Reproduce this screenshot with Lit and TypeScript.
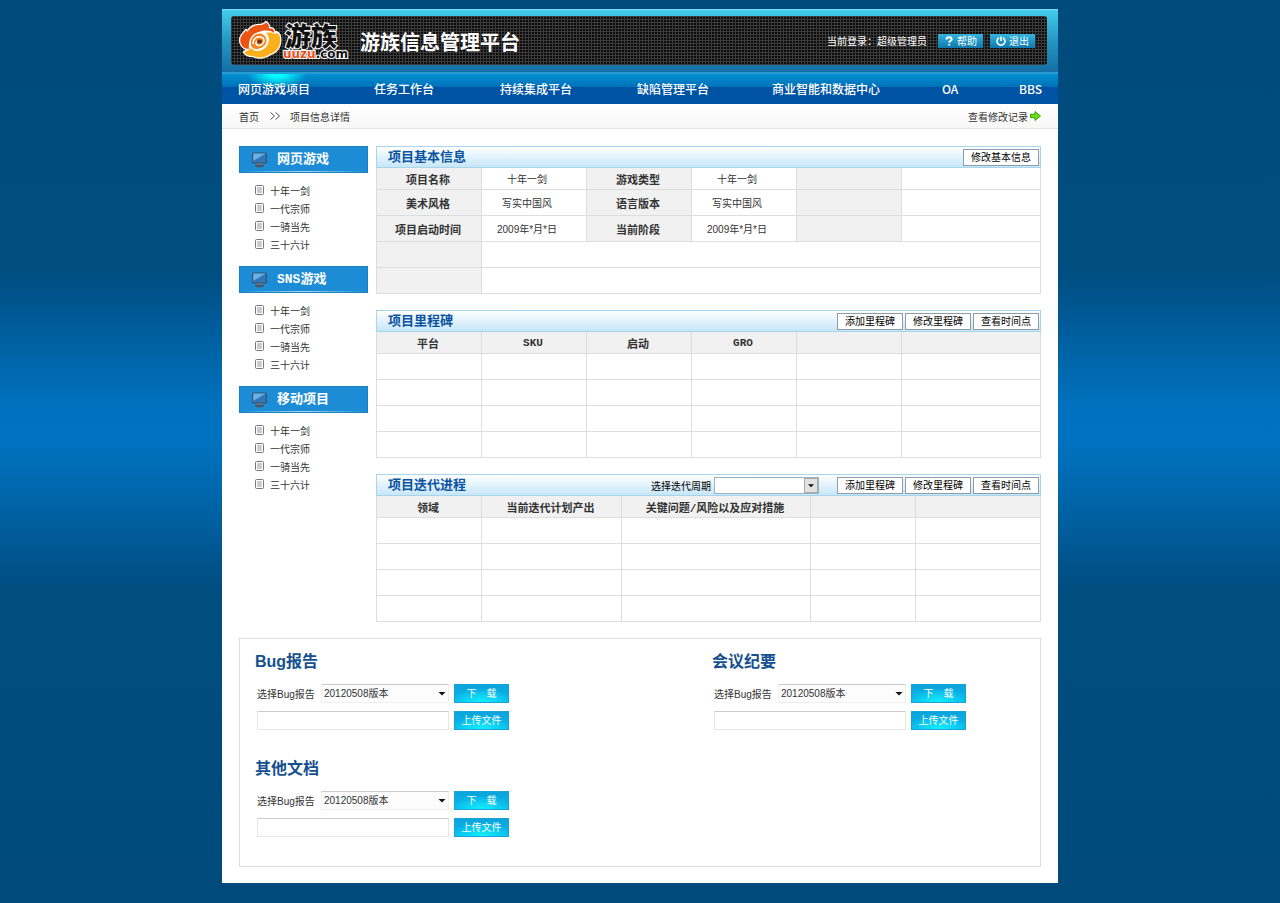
import { LitElement, html, css, svg } from "lit";
import { customElement } from "lit/decorators.js";

const monitorIcon = html`<svg class="monitor" viewBox="0 0 17 17" aria-hidden="true">
  <path d="M6.500 12h4l1 2.500H5.500z" fill="#8b98a3" />
  <ellipse cx="8.500" cy="14.800" rx="4.500" ry="1.500" fill="#4b5864" />
  <rect x="1" y="1.500" width="15" height="11" rx="1" fill="#3c5468" />
  <rect x="2.200" y="2.600" width="12.600" height="8.800" fill="#2f77b9" />
  <path d="M2.200 2.600h12.600L2.200 10z" fill="#69aee4" />
</svg>`;

const docIcon = html`<svg class="doc" viewBox="0 0 9 10" aria-hidden="true">
  <rect x="0.500" y="0.500" width="8" height="9" rx="1" fill="#fff" stroke="#777" />
  <path d="M2.200 3h4.600M2.200 5h4.600M2.200 7h4.600" stroke="#777" stroke-width="0.800" />
</svg>`;

const flameOuter = "M5 31C8 30 9 29 10 28C2 28 -1 19 3 14C5 11 6 11 7 9C8 11 8 11 9 10C12 5 17 4 21 4C24 4 27 2 27 1C29 3 31 5 30 8C33 6 36 9 35 12C38 10 41 13 41 17C42 25 38 31 31 33C28 36 20 38 14 35C10 35 7 34 5 31Z";

const flame = svg`
  <path d=${flameOuter} fill="#fff" stroke="#fff" stroke-width="2.500" stroke-linejoin="round" />
  <path d="M10 28C2 28 -1 19 3 14C5 11 6 11 7 9C8 11 8 11 9 10C12 5 17 4 21 4C24 4 27 2 27 1C29 3 31 5 30 8C33 6 36 9 35 12C31 9 25 9 20 11C13 13 9 19 10 28Z" fill="#ec5414" />
  <path d="M5 31C8 30 10 29 12 27C16 32 24 30 27 26C31 21 31 16 27 12C31 11 34 12 35 13C38 11 41 13 41 17C42 25 38 31 31 33C28 36 20 38 14 35C10 35 7 34 5 31Z" fill="#fbb01b" />
  <path d="M12 26C9 18 15 11 22 12C28 14 30 20 26 25C22 29 15 30 12 26Z" fill="#f5851f" stroke="#fff" stroke-width="1.200" />
  <path d="M14 23C14 17 19 14 24 17C27 21 22 26 18 24C16 23 17 20 19 20" fill="none" stroke="#fff" stroke-width="1.500" />
  <ellipse cx="20.500" cy="20.500" rx="2.500" ry="2" fill="#7a2c10" />`;

interface Section { title: string; items: string[]; }

const games = ["十年一剑", "一代宗师", "一骑当先", "三十六计"];
const sections: Section[] = [
  { title: "网页游戏", items: games },
  { title: "SNS游戏", items: games },
  { title: "移动项目", items: games },
];
const navItems = ["网页游戏项目", "任务工作台", "持续集成平台", "缺陷管理平台", "商业智能和数据中心", "OA", "BBS"];
const blankRows = [0, 1, 2, 3];

@customElement("app-root")
export class AppRoot extends LitElement {
  static styles = css`
    :host {
      display: block;
      box-sizing: border-box;
      min-height: 100vh;
      padding: 9px 16px 20px;
      background: linear-gradient(#004b7c 0, #004d80 270px, #0070bc 400px, #0072c0 435px, #006fba 460px, #004d80 590px, #004b7c 100%);
      font-family: "Liberation Sans", "Noto Sans CJK SC", sans-serif;
      font-size: 10px;
      color: #333;
    }
    * { box-sizing: border-box; }
    a { color: inherit; text-decoration: none; }
    h1, h2, h3, ul { margin: 0; padding: 0; list-style: none; }
    button, select, input { font: inherit; margin: 0; padding: 0; border-radius: 0; }
    svg { display: block; flex: none; }

    .page { max-width: 836px; margin: 0 auto; background: #fff; }

    .banner {
      padding: 6px 11px 7px 9px;
      border-top: 1px solid #7fdcf0;
      background: linear-gradient(#43cdec, #2496c4 50%, #146ea6);
    }
    .panel {
      display: flex;
      align-items: center;
      height: 49px;
      padding: 0 12px 0 8px;
      border-radius: 3px;
      background-color: #0c0c0c;
      background-image:
        repeating-linear-gradient(90deg, #3a3a3a 0 1px, transparent 1px 3px),
        repeating-linear-gradient(#3a3a3a 0 1px, transparent 1px 3px);
    }
    .logo { width: 113px; height: 40px; margin-right: 8px; }
    .logo-cn { font: 900 26px "Liberation Sans", "Noto Sans CJK SC", sans-serif; }
    .logo-en { font: bold 12px "DejaVu Sans", sans-serif; }
    .title { flex: 1; padding-top: 4px; font-size: 20px; line-height: 24px; font-weight: 700; color: #fff; }
    .user { margin-right: 11px; color: #fff; }
    .tool {
      display: flex;
      align-items: center;
      justify-content: center;
      gap: 3px;
      width: 45px;
      height: 14px;
      border: 0;
      background: linear-gradient(#36b4de, #0d78ae);
      color: #fff;
      cursor: pointer;
    }
    .tool + .tool { margin-left: 7px; }
    .tool svg { width: 10px; height: 10px; }

    .nav {
      display: grid;
      grid-template-columns: 136fr 126fr 137fr 135fr 170fr 77fr auto;
      height: 32px;
      padding: 0 16px;
      border-top: 2px solid #2b9bd3;
      background:
        radial-gradient(ellipse 30px 14px at 55px 0, #00ffff 20%, transparent),
        linear-gradient(#0090d2, #0070b8 13px, #0052a2 13px, #0056a8);
      color: #fff;
      font-family: "Noto Sans CJK SC", sans-serif;
      font-size: 12px;
      line-height: 30px;
      font-weight: 500;
      white-space: nowrap;
    }

    .crumbs {
      display: flex;
      align-items: center;
      height: 25px;
      padding: 0 17px;
      border-bottom: 1px solid #e4e4e4;
      background: linear-gradient(#fff, #f7f7f7);
    }
    .crumbs svg { width: 10px; height: 8px; margin: 0 10px 0 11px; }
    .history { display: flex; align-items: center; gap: 2px; margin-left: auto; }
    .crumbs .history svg { width: 11px; height: 10px; margin: 0; }

    .body { display: grid; grid-template-columns: 129px minmax(0, 1fr); gap: 8px; padding: 17px 17px 0; }
    .group { margin-bottom: 13px; }
    .group-title {
      display: flex;
      align-items: center;
      gap: 9px;
      height: 27px;
      padding-left: 11px;
      border: 1px solid #1a80c6;
      background: linear-gradient(90deg, transparent, #a7dbf5, transparent) 0 100% / 100% 1px no-repeat, #1d8cd6;
      color: #fff;
      font-family: "Liberation Mono", "Noto Sans CJK SC", monospace;
      font-size: 13px;
      line-height: 25px;
    }
    .monitor { width: 17px; height: 17px; }
    .list { padding: 8px 0 0 16px; }
    .list a { display: flex; align-items: center; gap: 6px; height: 18px; }
    .doc { width: 9px; height: 10px; }

    .block { margin-bottom: 16px; }
    .bar {
      display: flex;
      align-items: center;
      gap: 2px;
      height: 22px;
      padding: 0 1px 0 11px;
      border: 1px solid #a9d5ea;
      background: linear-gradient(#fff, #c6e6f8);
    }
    .bar h2 { flex: 1; font-size: 13px; line-height: 20px; color: #0a53a0; }
    .small {
      height: 17px;
      padding: 0 7px;
      border: 1px solid #8e9ca6;
      background: #fff;
      color: #000;
      line-height: 15px;
      cursor: pointer;
    }
    .pick { display: flex; align-items: center; gap: 3px; margin-right: 16px; color: #000; }
    .combo { position: relative; display: flex; }
    .combo select { appearance: none; width: 105px; height: 17px; border: 1px solid #9db2c0; background: #fff; }
    .combo svg {
      position: absolute;
      top: 1px;
      right: 1px;
      width: 14px;
      height: 15px;
      border: 1px solid #aaa;
      background: #e2e2e2;
      pointer-events: none;
    }
    table { width: 100%; table-layout: fixed; border-collapse: separate; border-spacing: 0; border-left: 1px solid #ddd; }
    th, td { height: 26px; padding: 0 14px 0 0; border: solid #ddd; border-width: 0 1px 1px 0; text-align: center; font-weight: 400; }
    th { background: #f1f1f1; padding-right: 2px; font-family: "Liberation Mono", "Noto Sans CJK SC", monospace; font-size: 11px; font-weight: 700; }
    tr.head > * { height: 22px; }
    .c105 { width: 105px; }
    .c140 { width: 140px; }
    .c189 { width: 189px; }

    .files {
      display: grid;
      grid-template-columns: 457px minmax(0, 1fr);
      row-gap: 19px;
      margin: 0 17px;
      padding: 11px 15px 21px;
      border: 1px solid #ddd;
    }
    .file h3 { height: 24px; margin-bottom: 9px; font-size: 16px; line-height: 24px; font-weight: 700; color: #17508f; }
    .row { display: flex; align-items: center; height: 20px; margin-bottom: 7px; padding-left: 2px; }
    .file .row:last-child { margin-bottom: 8px; }
    .row label { width: 64px; white-space: nowrap; }
    .row .combo { margin-right: 5px; }
    .row select { width: 128px; height: 19px; padding-left: 2px; border-color: #ccc #eee #eee #f1f1f1; background: #fcfcfc; color: #333; }
    .row .combo svg { top: 0; right: 0; height: 19px; border: 0; background: none; }
    .row input { width: 192px; height: 19px; margin-right: 5px; border: 1px solid; border-color: #ccc #e6e6e6 #e6e6e6; }
    .action {
      width: 55px;
      height: 19px;
      border: 1px solid #18a2d8;
      background: radial-gradient(ellipse 60% 80% at 50% 100%, #12f0ff, transparent), linear-gradient(#0ba4dc, #08b8ea);
      color: #fff;
      line-height: 17px;
      white-space: pre;
      cursor: pointer;
    }
    .foot { height: 16px; }
  `;

  private arrow = html`<svg viewBox="0 0 14 15" aria-hidden="true"><path d="M3.500 6h7L7 9.500z" fill="#111" /></svg>`;

  private fileBox(id: string, title: string) {
    return html`<section class="file">
      <h3>${title}</h3>
      <div class="row">
        <label for=${id}>选择Bug报告</label>
        <span class="combo"><select id=${id}><option>20120508版本</option></select>${this.arrow}</span>
        <button class="action">${"下　载"}</button>
      </div>
      <div class="row">
        <input type="text" aria-label="${title}文件" />
        <button class="action">上传文件</button>
      </div>
    </section>`;
  }

  private milestoneButtons() {
    return ["添加里程碑", "修改里程碑", "查看时间点"].map((t) => html`<button class="small">${t}</button>`);
  }

  private blank(columns: number) {
    return blankRows.map(() => html`<tr>${Array.from({ length: columns }, () => html`<td></td>`)}</tr>`);
  }

  render() {
    return html`<div class="page">
      <header>
        <div class="banner">
          <div class="panel">
            <svg class="logo" viewBox="0 0 113 40" role="img" aria-label="游族 uuzu.com">
              <text class="logo-cn" x="46" y="25" fill="#111" stroke="#fff" stroke-width="2" paint-order="stroke">游族</text>
              <text class="logo-en" x="44" y="37" stroke="#fff" stroke-width="2" paint-order="stroke"><tspan fill="#e8501a">uuzu</tspan><tspan fill="#111">.com</tspan></text>
              ${flame}
            </svg>
            <h1 class="title">游族信息管理平台</h1>
            <span class="user">当前登录：超级管理员</span>
            <button class="tool"><svg viewBox="0 0 10 10" aria-hidden="true"><path d="M2.500 3.500C2.500 0.500 7.700 0.500 7.700 3.200C7.700 5 5.200 4.800 5.200 6.700M5.200 8v1.600" fill="none" stroke="#fff" stroke-width="2" /></svg>帮助</button>
            <button class="tool"><svg viewBox="0 0 10 10" aria-hidden="true"><path d="M3 1.800A4 4 0 1 0 7 1.800M5 0.500v4.500" fill="none" stroke="#fff" stroke-width="1.600" /></svg>退出</button>
          </div>
        </div>
        <nav class="nav">${navItems.map((t) => html`<a href="#">${t}</a>`)}</nav>
      </header>
      <div class="crumbs">
        <a href="#">首页</a>
        <svg viewBox="0 0 10 8" aria-hidden="true"><path d="M0.500 0.500L4.500 4L0.500 7.500M5.500 0.500L9.500 4L5.500 7.500" fill="none" stroke="#555" /></svg>
        <span>项目信息详情</span>
        <a class="history" href="#">查看修改记录<svg viewBox="0 0 11 10" aria-hidden="true"><path d="M0.500 3.200H5V0.500L10.500 5L5 9.500V6.800H0.500z" fill="#6fdc14" stroke="#3d9e12" /></svg></a>
      </div>
      <div class="body">
        <aside>
          ${sections.map((s) => html`<section class="group">
            <h2 class="group-title">${monitorIcon}${s.title}</h2>
            <ul class="list">${s.items.map((i) => html`<li><a href="#">${docIcon}${i}</a></li>`)}</ul>
          </section>`)}
        </aside>
        <main>
          <section class="block">
            <div class="bar"><h2>项目基本信息</h2><button class="small">修改基本信息</button></div>
            <table>
              <colgroup><col class="c105" /><col class="c105" /><col class="c105" /><col class="c105" /><col class="c105" /><col /></colgroup>
              <tr class="head"><th>项目名称</th><td>十年一剑</td><th>游戏类型</th><td>十年一剑</td><th></th><td></td></tr>
              <tr><th>美术风格</th><td>写实中国风</td><th>语言版本</th><td>写实中国风</td><th></th><td></td></tr>
              <tr><th>项目启动时间</th><td>2009年*月*日</td><th>当前阶段</th><td>2009年*月*日</td><th></th><td></td></tr>
              <tr><th></th><td colspan="5"></td></tr>
              <tr><th></th><td colspan="5"></td></tr>
            </table>
          </section>
          <section class="block">
            <div class="bar"><h2>项目里程碑</h2>${this.milestoneButtons()}</div>
            <table>
              <colgroup><col class="c105" /><col class="c105" /><col class="c105" /><col class="c105" /><col class="c105" /><col /></colgroup>
              <tr class="head"><th>平台</th><th>SKU</th><th>启动</th><th>GRO</th><th></th><th></th></tr>
              ${this.blank(6)}
            </table>
          </section>
          <section class="block">
            <div class="bar">
              <h2>项目迭代进程</h2>
              <span class="pick"><label for="cycle">选择迭代周期</label><span class="combo"><select id="cycle"><option></option></select>${this.arrow}</span></span>
              ${this.milestoneButtons()}
            </div>
            <table>
              <colgroup><col class="c105" /><col class="c140" /><col class="c189" /><col class="c105" /><col /></colgroup>
              <tr class="head"><th>领域</th><th>当前迭代计划产出</th><th>关键问题/风险以及应对措施</th><th></th><th></th></tr>
              ${this.blank(5)}
            </table>
          </section>
        </main>
      </div>
      <div class="files">
        ${this.fileBox("bug", "Bug报告")}
        ${this.fileBox("minutes", "会议纪要")}
        ${this.fileBox("other", "其他文档")}
      </div>
      <div class="foot"></div>
    </div>`;
  }
}
